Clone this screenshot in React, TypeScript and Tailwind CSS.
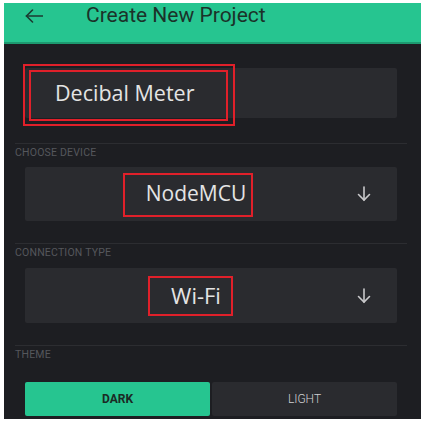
import React from 'react';

// small section label with a divider line above it
function SectionLabel({ text }: { text: string }) {
  return (
    <div className="ml-[11px] mr-[14px] border-t border-[#2c2d31] pt-[3px]">
      <span className="block text-[10.5px] leading-[12px] tracking-[0.2px] text-[#55575c]" style={{ fontFamily: 'Roboto, sans-serif' }}>
        {text}
      </span>
    </div>
  );
}

function ArrowDown() {
  return (
    <svg width="18" height="18" viewBox="0 0 18 18" fill="none" stroke="#c9c9cb" strokeWidth="1.6" strokeLinecap="round">
      <path d="M9 2v13" />
      <path d="M3.5 9.5L9 15l5.5-5.5" />
    </svg>
  );
}

export default function App() {
  return (
    <div className="w-full h-[425px] bg-white pt-[3px] pl-[4px]" style={{ fontFamily: '"Open Sans", sans-serif' }}>
      <div className="w-[417px] h-[416px] bg-[#1d1e22] overflow-hidden">
        {/* header */}
        <div className="h-[41px] bg-[#26c590] border-b-2 border-[#1d9a70] flex items-start">
          <svg className="ml-[21px] mt-[6px]" width="18" height="14" viewBox="0 0 18 14" fill="none" stroke="#1c3a30" strokeWidth="1.6" strokeLinecap="round">
            <path d="M1.5 7h16" />
            <path d="M7.5 1L1.5 7l6 6" />
          </svg>
          <span className="ml-[43px] mt-[-1px] text-[21px] leading-[26px] text-[#1b3229]" style={{ fontFamily: 'Roboto, sans-serif' }}>
            Create New Project
          </span>
        </div>

        {/* project name */}
        <div className="relative ml-[21px] mr-[24px] mt-[24px] h-[50px] rounded-[2px] bg-[#2a2b2f] flex items-center">
          <span className="ml-[30px] text-[21.5px] text-[#e4e4e4]">Decibal Meter</span>
          <div className="absolute left-[-2px] top-[-4px] w-[212px] h-[62px] border-[2.5px] border-[#e0202a]" />
          <div className="absolute left-[4px] top-[2px] w-[199px] h-[51px] border-2 border-[#e0202a]" />
        </div>

        <div className="mt-[25px]">
          <SectionLabel text="CHOOSE DEVICE" />
        </div>

        {/* device */}
        <div className="relative ml-[21px] mr-[24px] mt-[8px] h-[54px] rounded-[2px] bg-[#2a2b2f] flex items-center">
          <span className="flex-1 text-center pl-[12px] text-[21px] text-[#e4e4e4]">NodeMCU</span>
          <div className="mr-[24px]">
            <ArrowDown />
          </div>
          <div className="absolute left-[98px] top-[6px] w-[130px] h-[44px] border-[2.5px] border-[#e0202a]" />
        </div>

        <div className="mt-[22px]">
          <SectionLabel text="CONNECTION TYPE" />
        </div>

        {/* connection */}
        <div className="relative ml-[21px] mr-[24px] mt-[9px] h-[55px] rounded-[2px] bg-[#2a2b2f] flex items-center">
          <span className="flex-1 text-center pl-[12px] text-[22px] text-[#e4e4e4]">Wi-Fi</span>
          <div className="mr-[24px]">
            <ArrowDown />
          </div>
          <div className="absolute left-[123px] top-[8px] w-[85px] h-[40px] border-[2.5px] border-[#e0202a]" />
        </div>

        <div className="mt-[22px]">
          <SectionLabel text="THEME" />
        </div>

        {/* theme */}
        <div className="ml-[21px] mr-[24px] mt-[21px] h-[34px] flex gap-[2px]">
          <div className="flex-1 rounded-[2px] bg-[#26c590] flex items-center justify-center text-[12px] font-bold text-[#1b2a24]" style={{ fontFamily: 'Roboto, sans-serif' }}>
            DARK
          </div>
          <div className="flex-1 rounded-[2px] bg-[#2a2b2f] flex items-center justify-center text-[12px] font-light text-[#d0d0d2]" style={{ fontFamily: 'Roboto, sans-serif' }}>
            LIGHT
          </div>
        </div>
      </div>
    </div>
  );
}
